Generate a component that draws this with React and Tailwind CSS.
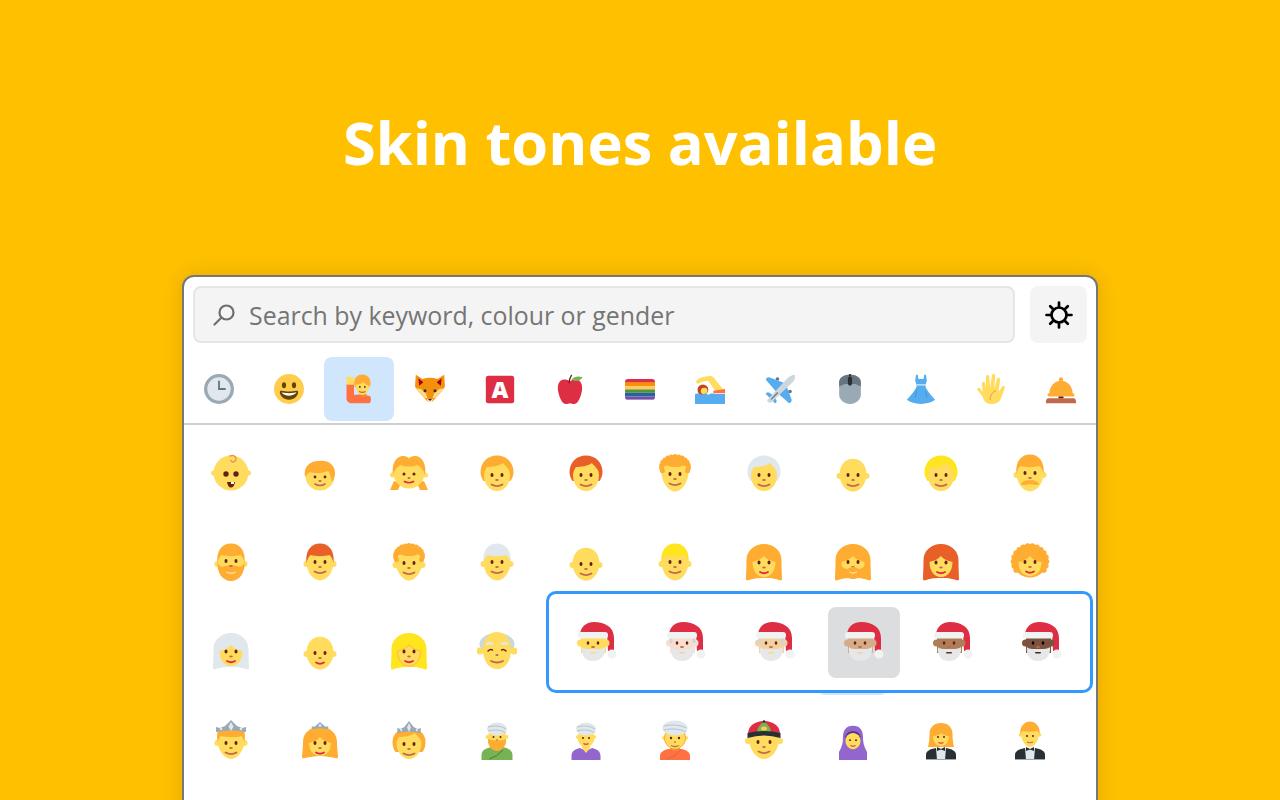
import React from 'react';

const SKIN = '#FFDC5D';
const ORANGE = '#FFAC33';
const RED = '#E95F28';
const WHITE = '#E1E8ED';
const BLOND = '#FFE51E';
const EYE = '#662113';
const NOSE = '#C1694F';
const LIP = '#DD2E44';

const Box = ({ size = 40, view = 40, children }) => (
  <svg width={size} height={size} viewBox={`0 0 ${view} ${view}`}>
    {children}
  </svg>
);

// eyes, nose and mouth, shared by all the people
const Features = ({ y = 20, gap = 5, lips, smile = true }) => (
  <>
    <ellipse cx={20 - gap} cy={y} rx="1.5" ry="2" fill={EYE} />
    <ellipse cx={20 + gap} cy={y} rx="1.5" ry="2" fill={EYE} />
    <ellipse cx="20" cy={y + 5} rx="1.8" ry="1.1" fill={NOSE} />
    {smile && (
      <path
        d={`M${lips ? 16 : 14.5} ${y + 9.5}q${lips ? '4 2.5 8 0' : '5.5 3.2 11 0'}`}
        fill="none"
        stroke={lips ? LIP : NOSE}
        strokeWidth="1.8"
        strokeLinecap="round"
      />
    )}
  </>
);

const HEAD = 'M6.500 20C6.500 10 12 3 20 3s13.500 7 13.500 17-6.500 18.500-13.500 18.500S6.500 30 6.500 20z';

const Ears = ({ y = 21 }) => (
  <>
    <circle cx="6.500" cy={y} r="3" fill={SKIN} />
    <circle cx="33.500" cy={y} r="3" fill={SKIN} />
  </>
);

const Bald = ({ lips }) => (
  <Box>
    <g transform="translate(0 2)">
      <Ears />
      <path d={HEAD} fill={SKIN} transform="translate(0 1) scale(1 .93)" />
      <Features y={20} lips={lips} />
    </g>
  </Box>
);

const ManShort = ({ hair = ORANGE, beard, mustache }) => (
  <Box>
    <Ears y={22} />
    <path d={HEAD} fill={SKIN} />
    <path d="M6.500 21C5 9 11 1.500 20 1.500S35 9 33.500 21c-1-4-2-6-4-8-5 1.500-14 1.500-19 0-2 2-3 4-4 8z" fill={hair} />
    {beard && (
      <>
        <path d="M6.500 20c1 3 2 4 4.500 5 3-1 6-2 9-2s6 1 9 2c2.500-1 3.500-2 4.500-5 1 11-5.500 19-13.500 19S5.500 31 6.500 20z" fill={hair} />
        <path d="M15 30q5 2 10 0-5 3.500-10 0z" fill="#FFD983" stroke="#FFD983" />
      </>
    )}
    {mustache ? (
      <>
        <Features y={20} smile={false} />
        <path d="M11 31c3-3 6-4 9-3 3-1 6 0 9 3-3 1-6 0-9-.500-3 .5-6 1.500-9 .5z" fill={hair} stroke={hair} />
      </>
    ) : (
      !beard ? <Features y={20} /> : <Features y={19} smile={false} />
    )}
  </Box>
);

const Adult = ({ hair = ORANGE }) => (
  <Box>
    <path d="M3.500 19C3.500 9 11 2.500 20 2.500S36.500 9 36.500 19c0 3-1 6-3 9H6.500c-2-3-3-6-3-9z" fill={hair} />
    <path d="M7 22c0-3 1.500-6 3-8 5 0 12-1 16-4 2 3 7 6 7 12 0 10-6 16-13 16S7 32 7 22z" fill={SKIN} />
    <Features y={22} />
  </Box>
);

const Curly = ({ ears }) => {
  const bumps = [];
  for (let i = 0; i <= 14; i++) {
    const a = Math.PI * 1.12 - (i / 14) * Math.PI * 1.24;
    bumps.push(
      <circle key={i} cx={20 + Math.cos(a) * 13.500} cy={14 - Math.sin(a) * 10.5} r="2.500" fill={ORANGE} />
    );
  }
  return (
    <Box>
      {ears && <Ears y={23} />}
      <path d="M6.500 20C6.500 12 12 8 20 8s13.500 4 13.500 12-6.500 18.500-13.500 18.500S6.500 28 6.500 20z" fill={SKIN} />
      <path d="M5.500 17C5 8 12 3.500 20 3.500S35 8 34.500 17c-2-3-4-4-6-4.500-5 2-11 2-17 0-2 .5-4 1.500-6 4.500z" fill={ORANGE} />
      {bumps}
      <Features y={21} />
    </Box>
  );
};

const CurlyWoman = () => {
  const bumps = [];
  for (let i = 0; i < 22; i++) {
    const a = (i / 22) * Math.PI * 2;
    if (Math.sin(a) < -0.75) continue;
    bumps.push(
      <circle key={i} cx={20 + Math.cos(a) * 16.500} cy={19.500 - Math.sin(a) * 15.500} r="2.800" fill={ORANGE} />
    );
  }
  return (
    <Box>
      <ellipse cx="20" cy="19" rx="17" ry="16.500" fill={ORANGE} />
      {bumps}
      <path d="M8.500 20c3 0 8-2 11.500-6 2 3 7 6 11.500 6 0 9-5 14-11.500 14S8.500 29 8.500 20z" fill={SKIN} />
      <Features y={20} lips />
    </Box>
  );
};

const Woman = ({ hair = ORANGE, beard, outline }) => (
  <Box>
    <path d="M2.500 18C2.500 9 10 2 20 2s17.500 7 17.500 16c0 9 .5 15 .5 19 0 1-1 2-3 1-3-1-6-2-15-2s-12 1-15 2c-2 1-3 0-3-1 0-4 .5-10 .5-19z" fill={hair} />
    <path
      d="M8.500 20c3-1 8-2 11.500-6 2 3 7 5 11.500 6 0 9-5 15-11.500 15S8.500 29 8.500 20z"
      fill={SKIN}
      stroke={outline ? ORANGE : 'none'}
      strokeWidth="0.8"
    />
    {beard ? (
      <>
        <Features y={20} smile={false} />
        <path d="M8.500 24c2 2 3.500 3 5.500 3 2-1 4-2 6-2s4 1 6 2c2 0 3.500-1 5.500-3 2 6-4 13-11.500 13S6.500 30 8.500 24z" fill={hair} />
        <path d="M16 30q4 1.500 8 0-4 3-8 0z" fill="#FFD983" stroke="#FFD983" />
      </>
    ) : (
      <Features y={20.500} lips />
    )}
  </Box>
);

const Baby = () => (
  <Box>
    <circle cx="2.500" cy="20" r="2.500" fill={SKIN} />
    <circle cx="37.500" cy="20" r="2.500" fill={SKIN} />
    <circle cx="20" cy="20" r="17.500" fill={SKIN} />
    <circle cx="15" cy="21" r="2.700" fill={EYE} />
    <circle cx="25" cy="21" r="2.700" fill={EYE} />
    <path d="M16 29h8q-1 5.500-4 5.500T16 29z" fill={EYE} />
    <rect x="20" y="29" width="3" height="2" fill="#fff" />
    <path d="M19 3c3-1.500 6 0 6 3s-4 4-5 1.500" fill="none" stroke="#E8935F" strokeWidth="1.500" strokeLinecap="round" />
  </Box>
);

const Boy = () => (
  <Box>
    <circle cx="20" cy="23" r="14.500" fill={SKIN} />
    <path d="M5 24C3 13 11 7 20 8c8-1 16 4 15 14-1 3-1 4-3 7-1-5-2-9-4-11-4 2-14 3-18 1-2 1-3 3-5 5z" fill={ORANGE} />
    <circle cx="15" cy="24" r="1.400" fill={EYE} />
    <circle cx="25" cy="24" r="1.400" fill={EYE} />
    <ellipse cx="20" cy="28" rx="1.500" ry="1" fill={NOSE} />
    <path d="M15 31q5 3 10 0" fill="none" stroke={NOSE} strokeWidth="1.600" strokeLinecap="round" />
  </Box>
);

const Girl = () => (
  <Box>
    <path d="M5 28 1 37h8l3-7zM35 28l4 9h-8l-3-7z" fill={ORANGE} />
    <circle cx="3.500" cy="22" r="2.500" fill={SKIN} />
    <circle cx="36.500" cy="22" r="2.500" fill={SKIN} />
    <circle cx="20" cy="20" r="15.500" fill={SKIN} />
    <path d="M4 22C2 10 8 3 14 3c3 0 5 1 6 3 1-2 3-3 6-3 6 0 12 7 10 19-2-6-5-9-8-10-4 2-12 2-16 0-3 1-6 4-8 10z" fill={ORANGE} />
    <circle cx="15" cy="21" r="1.500" fill={EYE} />
    <circle cx="25" cy="21" r="1.500" fill={EYE} />
    <ellipse cx="20" cy="25" rx="1.500" ry="1" fill={NOSE} />
    <path d="M15.500 28.500q4.500 2.500 9 0" fill="none" stroke={LIP} strokeWidth="1.700" strokeLinecap="round" />
  </Box>
);

const OldMan = () => (
  <Box>
    <ellipse cx="20" cy="13" rx="17.500" ry="11" fill="#CCD6DD" />
    <circle cx="3" cy="20" r="3.500" fill={SKIN} />
    <circle cx="37" cy="20" r="3.500" fill={SKIN} />
    <path d="M6 19C6 8 12 1 20 1s14 7 14 18-6 19-14 19S6 30 6 19z" fill={SKIN} />
    <path d="M10 13q3-2 5 0M25 13q3-2 5 0" stroke={WHITE} strokeWidth="2.200" fill="none" strokeLinecap="round" />
    <path d="M11 20q2.500-2.500 4.500-1M29 20q-2.500-2.500-4.500-1" stroke={EYE} strokeWidth="1.400" fill="none" strokeLinecap="round" />
    <ellipse cx="20" cy="24" rx="1.700" ry="1.100" fill={NOSE} />
    <path d="M14 30q6 3 12 0" stroke={NOSE} strokeWidth="1.800" fill="none" strokeLinecap="round" />
  </Box>
);

const Tiara = ({ y = 0, w = 1 }) => (
  <g transform={`translate(${20 - 20 * w} ${y}) scale(${w} 1)`}>
    <path d="M5 12V7l4 1 5-2 6-6 6 6 5 2 4-1v5q-15-3-30 0z" fill="#99AAB5" />
    <path d="M20 2l2.500 4.500L20 11l-2.500-4.500z" fill={WHITE} />
    <circle cx="10" cy="9" r="1.300" fill={WHITE} />
    <circle cx="30" cy="9" r="1.300" fill={WHITE} />
  </g>
);

const Prince = () => (
  <Box>
    <Ears y={23} />
    <path d="M6.500 21C6.500 13 13 8 20 8s13.500 5 13.500 13-6.500 18-13.500 18S6.500 29 6.500 21z" fill={SKIN} />
    <path d="M6.500 22C5.500 14 6.500 10 8 9h24c1.500 1 2.500 5 1.500 13-1-3-2-4-3-6-6 2-15 1-21 0-1 2-2 3-3 6z" fill={ORANGE} />
    <Tiara y={0} />
    <Features y={23} />
  </Box>
);

const Princess = () => (
  <Box>
    <path d="M3 22C3 13 10 7 20 7s17 6 17 15c0 7 1 12 1 15 0 1-1 2-3 1-5-1-9-2-15-2s-10 1-15 2c-2 1-3 0-3-1 0-3 1-8 1-15z" fill={ORANGE} />
    <path d="M9 23c3-1 8-2 11-6 2 3 7 5 11 6 0 8-5 13-11 13S9 31 9 23z" fill={SKIN} />
    <g transform="translate(9 2) scale(.55 .6)">
      <path d="M5 12V7l5 1 5-4 5-4 5 4 5 4 5-1v5q-15-3-30 0z" fill="#99AAB5" />
      <circle cx="20" cy="6" r="2.500" fill={WHITE} />
    </g>
    <Features y={23} lips />
  </Box>
);

const PersonTiara = () => (
  <Box>
    <path d="M3.500 22C3.500 13 11 8 20 8s16.500 5 16.500 14c0 4-1 7-3 10H6.500c-2-3-3-6-3-10z" fill={ORANGE} />
    <path d="M7.500 23c0-3 1.500-4 2.500-6 5 0 12-1 16-4 2 3 6.500 6 6.500 10 0 9-6 16-12.500 16S7.500 32 7.500 23z" fill={SKIN} />
    <Tiara y={1} w={.78} />
    <Features y={24} />
  </Box>
);

const Turban = ({ y = 10, rx = 9, ry = 7 }) => (
  <>
    <ellipse cx="20" cy={y} rx={rx} ry={ry} fill="#E1E8ED" />
    <path
      d={`M${20 - rx + 1} ${y - 2}q${rx} -3 ${2 * rx - 2} 2M${20 - rx + 1} ${y + 2}q${rx} -3 ${2 * rx - 2} 2`}
      stroke="#99AAB5"
      strokeWidth="1"
      fill="none"
      opacity=".6"
    />
  </>
);

const TurbanMan = () => (
  <Box>
    <path d="M4.500 40v-5c0-5 5-7 10-8h11c5 1 10 3 10 8v5z" fill="#77B255" />
    <path d="M12 39q8-2 14-9" stroke="#3E721D" strokeWidth=".8" fill="none" />
    <circle cx="10.500" cy="17" r="2" fill={SKIN} />
    <circle cx="29.500" cy="17" r="2" fill={SKIN} />
    <ellipse cx="20" cy="17" rx="9" ry="9" fill={SKIN} />
    <path d="M11 19q9 3 18 0c1 7-4.500 12-9 12s-10-5-9-12z" fill={ORANGE} />
    <Turban y={9} rx={10} ry={6.500} />
    <circle cx="16.500" cy="17" r="1" fill={EYE} />
    <circle cx="23.500" cy="17" r="1" fill={EYE} />
    <ellipse cx="20" cy="20" rx="1" ry=".7" fill={NOSE} />
  </Box>
);

const TurbanWoman = () => (
  <Box>
    <path d="M5.500 40v-4c0-5 4-7 8.500-8l6 3 6-3c4.500 1 8.500 3 8.500 8v4z" fill="#9266CC" />
    <path d="M16 24h8v4l-4 5-4-5z" fill={SKIN} />
    <circle cx="11.500" cy="17" r="1.800" fill={SKIN} />
    <circle cx="28.500" cy="17" r="1.800" fill={SKIN} />
    <ellipse cx="20" cy="18" rx="8.500" ry="9" fill={SKIN} />
    <Turban y={9} rx={10} ry={6.500} />
    <circle cx="17" cy="18" r="1" fill={EYE} />
    <circle cx="23" cy="18" r="1" fill={EYE} />
    <path d="M17.500 23.500q2.500 1.500 5 0" stroke={LIP} strokeWidth="1.200" fill="none" />
  </Box>
);

const TurbanPerson = () => (
  <Box>
    <path d="M5 40v-4c0-4 4-6 8-7h14c4 1 8 3 8 7v4z" fill="#FF7043" />
    <path d="M12 39q8-2 14-9" stroke="#C1694F" strokeWidth=".8" fill="none" />
    <path d="M15 25h10v4q-5 3-10 0z" fill="#E89A2E" />
    <circle cx="9" cy="18" r="2" fill={SKIN} />
    <circle cx="31" cy="18" r="2" fill={SKIN} />
    <ellipse cx="20" cy="18" rx="11" ry="11" fill={ORANGE} />
    <ellipse cx="20" cy="18" rx="10" ry="10.500" fill={SKIN} />
    <Turban y={8} rx={12.500} ry={7.500} />
    <circle cx="16" cy="18" r="1.200" fill={EYE} />
    <circle cx="24" cy="18" r="1.200" fill={EYE} />
    <ellipse cx="20" cy="22" rx="1.200" ry=".8" fill={NOSE} />
    <path d="M16 25.500q4 2 8 0" stroke={NOSE} strokeWidth="1.300" fill="none" />
  </Box>
);

const Cap = () => (
  <Box>
    <circle cx="4" cy="21" r="3" fill={SKIN} />
    <circle cx="36" cy="21" r="3" fill={SKIN} />
    <path d="M5 18c0-5 6-6 15-6s15 1 15 6c0 11-7 21-15 21S5 29 5 18z" fill={SKIN} />
    <path d="M4 14C4 6 11 1 20 1s16 5 16 13z" fill="#DD2E44" />
    <path d="M13 13c0-5 3-9 7-11 4 2 7 6 7 11z" fill="#77B255" />
    <ellipse cx="20" cy="8.500" rx="3" ry="2" fill="#FFCC4D" />
    <circle cx="20" cy="1.500" r="1.300" fill="#292F33" />
    <path d="M3.500 13Q20 9 36.500 13v5Q20 13 3.500 18z" fill="#292F33" />
    <Features y={22} gap={6} />
  </Box>
);

const Hijab = () => (
  <Box>
    <g transform="translate(0 4) scale(1 .9)">
      <path d="M20 2c7 0 10 5 10 13 0 6 1 10 4 16v9H6v-9c3-6 4-10 4-16C10 7 13 2 20 2z" fill="#9266CC" />
      <path d="M12 15c1-5 4-7 8-7s7 2 8 7" fill="#553788" />
      <path d="M12.500 19c0-5 3-9 7.500-9s7.500 4 7.500 9c0 5-3.500 9-7.500 9s-7.500-4-7.500-9z" fill={SKIN} />
      <circle cx="17" cy="18" r="1" fill={EYE} />
      <circle cx="23" cy="18" r="1" fill={EYE} />
      <path d="M17.500 24q2.500 1.300 5 0" stroke={LIP} strokeWidth="1.200" fill="none" />
    </g>
  </Box>
);

const Tux = () => (
  <>
    <path d="M5 40v-5c0-4 4-6 10-7h10c6 1 10 3 10 7v5z" fill="#292F33" />
    <path d="M15 28h10l-1 12h-8z" fill={WHITE} />
    <path d="M5 39.500h30" stroke="#99AAB5" strokeWidth="1" />
    <path d="M16 27l4 2 4-2v4l-4-1.500-4 1.500z" fill="#292F33" />
  </>
);

const TuxWoman = () => (
  <Box>
    <path d="M8.500 14c0-8 6-11 11.500-11s11.500 3 11.500 11c0 5 .5 9 1.500 13H7c1-4 1.500-8 1.500-13z" fill={ORANGE} />
    <Tux />
    <path d="M12 16c3 0 7-1 8-3 2 2 5 3 8 3 0 6-3.500 10-8 10s-8-4-8-10z" fill={SKIN} />
    <circle cx="17" cy="17" r="1" fill={EYE} />
    <circle cx="23" cy="17" r="1" fill={EYE} />
    <path d="M17.500 22.500q2.500 1.300 5 0" stroke={LIP} strokeWidth="1.200" fill="none" />
  </Box>
);

const TuxMan = () => (
  <Box>
    <Tux />
    <circle cx="10.500" cy="15" r="1.800" fill={SKIN} />
    <circle cx="29.500" cy="15" r="1.800" fill={SKIN} />
    <path d="M11 13c0-8 5-10 9-10s9 2 9 10c0 8-5 14-9 14s-9-6-9-14z" fill={SKIN} />
    <path d="M10.500 15C9 6 15 1.500 20 1.500S31 6 29.500 15c-.5-2-1-3-2-4-5 1-10 1-15 0-1 1-1.500 2-2 4z" fill={ORANGE} />
    <circle cx="17" cy="16" r="1" fill={EYE} />
    <circle cx="23" cy="16" r="1" fill={EYE} />
    <path d="M17 22q3 1.500 6 0" stroke={NOSE} strokeWidth="1.200" fill="none" />
  </Box>
);

const Santa = ({ skin, hair, mouth = '#FFD983', eye = EYE }) => (
  <Box>
    <path d="M3 12C4 4 10 0 17 0c11 0 20 5 20 16v13h-6l-1-17z" fill="#DD2E44" />
    <circle cx="3.500" cy="21" r="3.500" fill={skin} />
    <circle cx="29" cy="21" r="3.500" fill={skin} />
    <rect x="4" y="14" width="25" height="17" fill={skin} />
    {hair && <path d="M3.500 16h3v5h-3zM26.500 16h3v5h-3z" fill={hair} />}
    <path d="M5 25c2 2 4 2 11 2s9 0 12-2c1 8-4 14-12 14S4 33 5 25z" fill="#E6E7E8" />
    <rect x="1" y="10" width="30" height="6.500" rx="3" fill="#F1F2F2" />
    <ellipse cx="11" cy="21" rx="1.300" ry="1.800" fill={eye} />
    <ellipse cx="21" cy="21" rx="1.300" ry="1.800" fill={eye} />
    <ellipse cx="16" cy="25" rx="2" ry="1" fill={NOSE} />
    <rect x="13" y="30" width="6" height="1.500" rx=".7" fill={mouth} />
    <circle cx="35" cy="32" r="4.500" fill="#F1F2F2" />
  </Box>
);

const Clock = () => (
  <Box size={30} view={36}>
    <circle cx="18" cy="18" r="18" fill="#99AAB5" />
    <circle cx="18" cy="18" r="14" fill="#E1E8ED" />
    <path d="M18 8v10h8" stroke="#66757F" strokeWidth="2.200" fill="none" />
  </Box>
);

const Grin = () => (
  <Box size={30} view={36}>
    <circle cx="18" cy="18" r="18" fill="#FFCC4D" />
    <ellipse cx="12" cy="13.500" rx="2.500" ry="3.500" fill="#664500" />
    <ellipse cx="24" cy="13.500" rx="2.500" ry="3.500" fill="#664500" />
    <path d="M18 21c-3.623 0-6.027-.422-9-1-.679-.131-2 0-2 2 0 4 4.595 9 11 9 6.404 0 11-5 11-9 0-2-1.321-2.132-2-2-2.973.578-5.377 1-9 1z" fill="#664500" />
    <path d="M9 22s3 1 9 1 9-1 9-1-2 4-9 4-9-4-9-4z" fill="#fff" />
  </Box>
);

const RaisedHand = () => (
  <Box size={30} view={36}>
    <path d="M3 12h9v13c4 0 6-1 9 0l9 1c2 .5 3 3 2 6v1c0 1-1 2-2 2H9c-3 0-6-2-6-6z" fill="#FF7043" />
    <path d="M3 3l2.500 1L8 3l2 1 2 0v9H3z" fill={SKIN} />
    <path d="M21 24h6v3q-3 2-6 0z" fill="#F19020" />
    <circle cx="22" cy="10.500" r="10" fill={ORANGE} />
    <path d="M14 13c3 0 7-1 9-3 2 2 4 3 7 4 0 6-3.500 11-8 11s-8-6-8-12z" fill={SKIN} />
    <circle cx="19" cy="15.500" r="1.100" fill={EYE} />
    <circle cx="25" cy="15.500" r="1.100" fill={EYE} />
    <path d="M18 21q4 2 8 0" stroke={NOSE} strokeWidth="1.400" fill="none" />
  </Box>
);

const Fox = () => (
  <Box size={30} view={36}>
    <path d="M1 1l8 5c6-2 12-2 18 0l8-5 1 14-5 7-8 9-2 2h-6l-2-2-8-9-5-7z" fill="#F4900C" />
    <path d="M4 5l6 5-5 4zM32 5l-6 5 5 4z" fill="#A0041E" />
    <path d="M0 17l7 1 6 5 2 6-3 0-6-6zM36 17l-7 1-6 5-2 6 3 0 6-6z" fill="#FFD983" />
    <circle cx="12" cy="20" r="1.800" fill="#292F33" />
    <circle cx="24" cy="20" r="1.800" fill="#292F33" />
    <path d="M14 30h8l-2 3.500h-4z" fill="#FFE8B6" />
    <path d="M15.500 30h5l-2.500 2.500z" fill="#292F33" />
  </Box>
);

const AButton = () => (
  <Box size={30} view={36}>
    <rect x="1" y="2" width="34" height="33" rx="3" fill="#DD2E44" />
    <text x="18" y="29" textAnchor="middle" fontSize="28" fontWeight="800" fontFamily="'Open Sans', sans-serif" fill="#fff">A</text>
  </Box>
);

const Apple = () => (
  <Box size={30} view={36}>
    <path d="M18 9c-2-2-5-3-9-2C5 8 3 13 3.500 19c1 8 5 17 9 17 3 0 4-1 5.500-1s2.500 1 5.500 1c4 0 8-9 9-17 .5-6-1.500-11-5.500-12-4-1-7 0-9 2z" fill="#DD2E44" />
    <path d="M17 11c0-4 1-7 3-10" stroke="#662113" strokeWidth="1.500" fill="none" />
    <path d="M20 7c3-4 8-5 13-3-2 4-8 6-13 3z" fill="#77B255" />
  </Box>
);

const Rainbow = () => (
  <Box size={30} view={36}>
    <defs>
      <clipPath id="flag">
        <rect x="0" y="6" width="36" height="25" rx="3.500" />
      </clipPath>
    </defs>
    <g clipPath="url(#flag)">
      <rect x="0" y="6" width="36" height="4.500" fill="#DD2E44" />
      <rect x="0" y="10" width="36" height="4.500" fill="#F4900C" />
      <rect x="0" y="14.500" width="36" height="4" fill="#FDCB58" />
      <rect x="0" y="18.500" width="36" height="4" fill="#5C913B" />
      <rect x="0" y="22.500" width="36" height="4.500" fill="#226699" />
      <rect x="0" y="27" width="36" height="4" fill="#744EAA" />
    </g>
  </Box>
);

const Swimmer = () => (
  <Box size={30} view={36}>
    <path d="M1 9c2-3 6-5 12-6 4-1 7-1 9 1l12 15-10 1-8-12c-4 0-9 2-13 4z" fill={SKIN} />
    <path d="M22 20l14-2v5H22z" fill="#FF7043" />
    <circle cx="9.500" cy="19" r="6.500" fill="#C1461F" />
    <circle cx="11" cy="20.500" r="4" fill={SKIN} />
    <path d="M0 24l4-1 4 2 4-2 4 2 4-2 4 1h12v13H0z" fill="#55ACEE" />
  </Box>
);

const Plane = () => (
  <Box size={30} view={36}>
    <circle cx="15" cy="6" r="2.200" fill="#66757F" />
    <circle cx="30" cy="21" r="2.200" fill="#66757F" />
    <path d="M1 7c0-2 2-3 4-3l19 7-10 11zM29 35c2 0 3-2 3-4l-7-19-11 10z" fill="#55ACEE" />
    <path d="M1 24c0-1 1-2 3-2l7 4-4 4zM12 35c1 0 2-1 2-3l-4-7-4 4z" fill="#55ACEE" />
    <path d="M3 31 26 6c3-3 7-5 9-5s1 6-2 9L8 34c-3 1-6 0-5-3z" fill="#CCD6DD" />
    <path d="M7.500 30.500l8-8.500" stroke="#66757F" strokeWidth="1.600" />
  </Box>
);

const Mouse = () => (
  <Box size={30} view={36}>
    <path d="M5 10C5 4 11 1 18 1s13 3 13 9v15c0 6-6 11-13 11S5 31 5 25z" fill="#99AAB5" />
    <path d="M5 10C5 4 11 1 18 1s13 3 13 9v5c-3-1-5-3-8-3H13c-3 0-5 2-8 3z" fill="#66757F" />
    <rect x="15.500" y="3" width="5" height="11" rx="2.500" fill="#292F33" />
    <rect x="17" y="0" width="2" height="3" fill="#292F33" />
  </Box>
);

const Dress = () => (
  <Box size={30} view={36}>
    <path d="M12 1h2l1 5h6l1-5h2l1 7-2 6c3 8 9 13 12 17-4 3-10 5-17 5S5 34 1 31c3-4 9-9 12-17l-2-6z" fill="#55ACEE" />
    <rect x="12.500" y="12" width="11" height="2" fill="#BBDDF5" />
    <path d="M13 20l-2 8M23 20l2 8" stroke="#3B88C3" strokeWidth=".8" />
  </Box>
);

const Vulcan = () => (
  <Box size={30} view={36}>
    <path d="M7 11c1-2.500 4-2 4 .5l1 6 0-14c0-3 4-3 4 0l1 13 2-15c.5-2.500 4-2 4 .5l-1 16 3-12c.5-2.500 4-2 4 .5l-2 15 4-6c1-2 4.500-1 3.500 1.500L30 29c-2 5-6 7-12 7-5 0-9-3-10-9L1.500 19c-.5-2.500 2-3.500 3.500-1.500L8 22z" fill="#FFDC5D" />
    <path d="M17 31c0-5 2-9 7-11" stroke="#EF9645" strokeWidth="1.200" fill="none" />
  </Box>
);

const Bell = () => (
  <Box size={30} view={36}>
    <path d="M4 24C4 15 10 8 18 8s14 7 14 16z" fill="#FFAC33" />
    <circle cx="18" cy="6.500" r="2.500" fill="#FFAC33" />
    <rect x="2" y="23" width="32" height="4" rx="1.500" fill="#FFAC33" />
    <rect x="15" y="27" width="6" height="2.500" fill="#662113" />
    <path d="M0 33c0-2 1-4 3-4h30c2 0 3 2 3 4v2H0z" fill="#C1694F" />
  </Box>
);

const tabs = [Clock, Grin, RaisedHand, Fox, AButton, Apple, Rainbow, Swimmer, Plane, Mouse, Dress, Vulcan, Bell];

const rows = [
  [
    <Baby />, <Boy />, <Girl />, <Adult />, <Adult hair={RED} />,
    <Curly />, <Adult hair={WHITE} />, <Bald />, <Adult hair={BLOND} />, <ManShort mustache />,
  ],
  [
    <ManShort beard />, <ManShort hair={RED} />, <Curly ears />, <ManShort hair={WHITE} />, <Bald />,
    <ManShort hair={BLOND} />, <Woman />, <Woman beard />, <Woman hair={RED} />, <CurlyWoman />,
  ],
  [
    <Woman hair={WHITE} />, <Bald lips />, <Woman hair={BLOND} outline />, <OldMan />,
  ],
  [
    <Prince />, <Princess />, <PersonTiara />, <TurbanMan />, <TurbanWoman />,
    <TurbanPerson />, <Cap />, <Hijab />, <TuxWoman />, <TuxMan />,
  ],
];

const tones = [
  { skin: '#FFDC5D' },
  { skin: '#F7DECE', mouth: '#F3D2A2', hair: '#CCD6DD' },
  { skin: '#F3D2A2', mouth: '#FFD983', hair: '#CCD6DD' },
  { skin: '#D5AB88', mouth: '#F3D2A2' },
  { skin: '#AF7E57', mouth: '#60352A' },
  { skin: '#7C533E', mouth: '#3D2E24', eye: '#000' },
];

export default function App() {
  return (
    <div className="h-screen w-full overflow-hidden bg-[#FFC000] font-['Open_Sans',sans-serif]">
      <div className="flex h-[275px] items-center justify-center pb-[1px] pt-[10px]">
        <h1 className="text-[59.6px] font-bold text-white">Skin tones available</h1>
      </div>

      <div className="relative mx-auto h-[600px] w-[916px] rounded-t-xl border-2 border-[#777] bg-white shadow-[0_0_20px_rgba(0,0,0,0.12)]">
        {/* Search row */}
        <div className="flex gap-[15px] px-[9px] pt-[9px]">
          <div className="flex h-[57px] flex-1 items-center gap-[13px] rounded-lg border-2 border-[#E5E5E5] bg-[#F4F4F4] pl-[17px]">
            <svg width="24" height="24" viewBox="0 0 24 24" fill="none" stroke="#6E6E6E" strokeWidth="2.2" strokeLinecap="round">
              <circle cx="14.500" cy="9.500" r="7" />
              <path d="M9.500 14.500 2.500 21.500" />
            </svg>
            <span className="pt-[2px] text-[24.9px] text-[#757575]">Search by keyword, colour or gender</span>
          </div>
          <button type="button" className="flex h-[57px] w-[57px] items-center justify-center rounded-lg bg-[#F4F4F4]">
            <svg width="28" height="28" viewBox="0 0 28 28" fill="none" stroke="#000" strokeWidth="2.700" strokeLinecap="round">
              <circle cx="14" cy="14" r="7.500" />
              <path d="M14 1.500v4M14 22.500v4M1.500 14h4M22.500 14h4M5.200 5.200 8 8M20 20l2.800 2.800M22.800 5.200 20 8M8 20l-2.800 2.800" />
            </svg>
          </button>
        </div>

        {/* Category tabs */}
        <div className="mt-[14px] grid grid-cols-[repeat(13,minmax(0,1fr))] border-b-2 border-[#CFCFCF] pb-[2px]">
          {tabs.map((Icon, i) => (
            <div
              key={i}
              className={`flex h-[64px] items-center justify-center rounded-lg ${i === 2 ? 'bg-[#D0E6FC]' : ''}`}
            >
              <Icon />
            </div>
          ))}
        </div>

        {/* Emoji grid */}
        <div className="ml-[2.6px] grid w-[888px] grid-cols-10 pt-[3px]">
          {rows.map((row, r) =>
            Array.from({ length: 10 }).map((_, c) => (
              <div key={`${r}-${c}`} className="relative flex h-[89px] items-center justify-center">
                {r === 2 && c === 7 && <div className="h-full w-[71px] rounded-lg bg-[#D0E6FC]" />}
                {row[c]}
              </div>
            ))
          )}
        </div>

        {/* Skin tone popup */}
        <div className="absolute left-[362px] top-[314px] h-[102px] w-[547px] rounded-[10px] border-[3px] border-[#3399FF] bg-white">
          <div className="grid h-full w-[537px] grid-cols-6 pl-[3px]">
            {tones.map((tone, i) => (
              <div key={i} className="flex items-center justify-center">
                <div className={`flex h-[71px] w-[72px] items-center justify-center rounded-lg ${i === 3 ? 'bg-[#DCDDDF]' : ''}`}>
                  <Santa {...tone} />
                </div>
              </div>
            ))}
          </div>
        </div>
      </div>
    </div>
  );
}
